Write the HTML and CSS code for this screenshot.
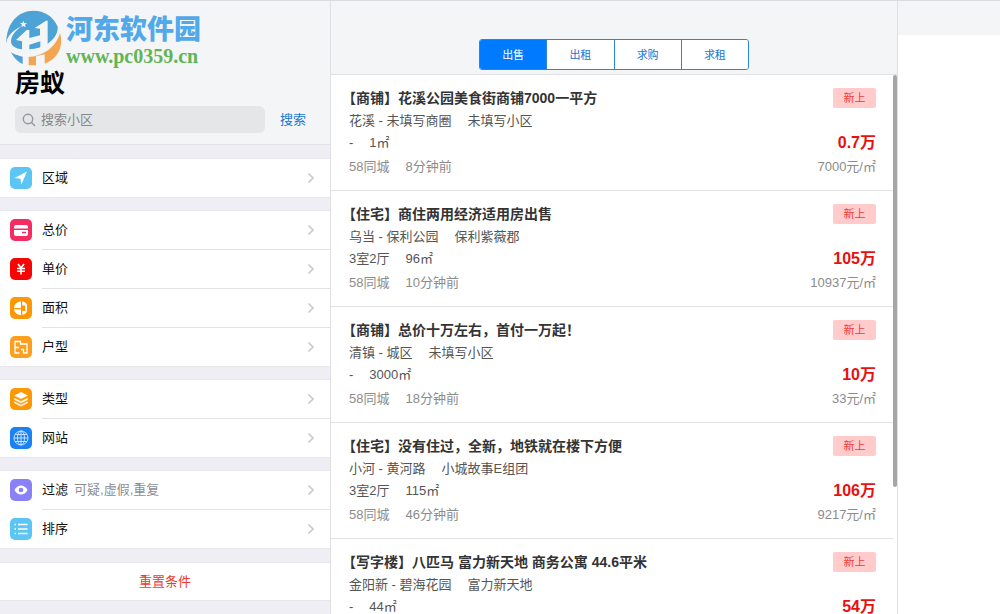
FILE: index.html
```html
<!DOCTYPE html>
<html lang="zh-CN">
<head>
<meta charset="utf-8">
<meta name="viewport" content="width=device-width, initial-scale=1">
<title>房蚁</title>
<link rel="stylesheet" href="styles.css">
</head>
<body>
<svg class="sprite" aria-hidden="true">
  <symbol id="chevron" viewBox="0 0 8 12"><path d="M1.500 1.500 6 6l-4.500 4.500" fill="none" stroke="currentColor" stroke-width="1.600"/></symbol>
</svg>
<div class="app">
  <aside class="sidebar">
    <header class="side-head">
      <div class="brand">
        <svg class="brand-mark" viewBox="9 12 171 171" aria-hidden="true">
          <path d="M13 106C14 50 50 14 94 14c34 0 60 18 73 48 2 30-28 58-70 68-36 8-66 6-80-8Z" fill="#4da3d6"/>
          <path d="M24 130c10 12 24 20 38 22v22C44 166 30 150 24 130Z" fill="#4da3d6"/>
          <path d="M80 153c50-4 82-32 94-72 12 42-8 78-46 92v-28l-26 6v27H80Z" fill="#f3a551"/>
          <path d="M60 60C30 74 12 94 13 116c4 28 40 38 80 32 42-8 76-36 82-76-12 32-42 50-78 56-38 6-68 0-70-20-1-16 12-34 33-48Z" fill="#f4f5f7"/>
          <path d="M42 102 74 72h8v24l32-8V68l-16-2 34-22h5v84l-22 10v-32l-33 10v24H60v-34Z" fill="#f4f5f7"/>
          <path d="m64 44 3 7 8 0-6 5 2 8-7-4-6 4 2-8-6-5 7 0Z" fill="#f4f5f7"/>
        </svg>
        <div class="brand-text">
          <span class="brand-name">河东软件园</span>
          <span class="brand-url">www.pc0359.cn</span>
        </div>
      </div>
      <h1 class="app-title">房蚁</h1>
      <form class="search">
        <label class="search-field">
          <svg class="search-icon" viewBox="0 0 14 14" aria-hidden="true"><circle cx="6" cy="6" r="4.700"/><path d="m9.500 9.500 3.500 3.500"/></svg>
          <input type="search" placeholder="搜索小区" aria-label="搜索小区">
        </label>
        <button type="button" class="search-button">搜索</button>
      </form>
    </header>
    <nav class="filters">
      <div class="group">
        <a class="row" href="#area">
          <svg class="icon sky" viewBox="0 0 22 22"><path d="M17 4.500 4.500 11l6 .8.800 6Z" fill="#fff"/></svg>
          <span class="row-body">区域<svg class="chevron"><use href="#chevron"/></svg></span>
        </a>
      </div>
      <div class="group">
        <a class="row" href="#total">
          <svg class="icon pink" viewBox="0 0 22 22"><path d="M4 8a2 2 0 0 1 2-2h10a2 2 0 0 1 2 2v1.500H4ZM4 11h14v4a2 2 0 0 1-2 2H6a2 2 0 0 1-2-2Z" fill="#fff"/><path d="M12 13.500h4" stroke="#f52c62" stroke-width="1.300"/></svg>
          <span class="row-body">总价<svg class="chevron"><use href="#chevron"/></svg></span>
        </a>
        <a class="row" href="#unit">
          <svg class="icon red" viewBox="0 0 22 22"><path d="m8 6 3 4 3-4M11 10v6.500M7 10.500h8M7 13.300h8" fill="none" stroke="#fff" stroke-width="1.600"/></svg>
          <span class="row-body">单价<svg class="chevron"><use href="#chevron"/></svg></span>
        </a>
        <a class="row" href="#size">
          <svg class="icon orange" viewBox="0 0 22 22"><path d="M11 4.500V11H4C4 7.500 7 4.500 11 4.500ZM4 12.300h7V18c-4 0-6.700-2.500-7-5.700ZM12.300 4.600c2.200.3 3.700 1.400 4.700 3v6.800c-1 1.800-2.500 3-4.700 3.400V14h3V8.500h-3Z" fill="#fff"/></svg>
          <span class="row-body">面积<svg class="chevron"><use href="#chevron"/></svg></span>
        </a>
        <a class="row" href="#layout">
          <svg class="icon amber" viewBox="0 0 22 22"><path d="M9.500 17H5V5.500h5.500V8H17v9h-3.500v-3.500h-2.500M5 11.500h4" fill="none" stroke="#fff" stroke-width="1.300"/></svg>
          <span class="row-body">户型<svg class="chevron"><use href="#chevron"/></svg></span>
        </a>
      </div>
      <div class="group">
        <a class="row" href="#type">
          <svg class="icon orange" viewBox="0 0 22 22"><path d="m11 4.200 6.500 3.300L11 10.800 4.500 7.500ZM4.500 10.200 11 13.400l6.500-3.200v1.600L11 15l-6.500-3.200ZM4.500 13.700 11 16.900l6.500-3.200v1.300L11 18.200 4.500 15Z" fill="#fff" stroke="#fff" stroke-width=".4" stroke-linejoin="round"/></svg>
          <span class="row-body">类型<svg class="chevron"><use href="#chevron"/></svg></span>
        </a>
        <a class="row" href="#site">
          <svg class="icon blue" viewBox="0 0 22 22"><g fill="none" stroke="#d5e9ff" stroke-width=".9"><circle cx="11" cy="11" r="7"/><ellipse cx="11" cy="11" rx="3.500" ry="7"/><path d="M11 4v14M4 11h14M5.200 7.500h11.600M5.200 14.500h11.600"/></g></svg>
          <span class="row-body">网站<svg class="chevron"><use href="#chevron"/></svg></span>
        </a>
      </div>
      <div class="group">
        <a class="row" href="#filter">
          <svg class="icon violet" viewBox="0 0 22 22"><path d="M4.500 11c3-6 10-6 13 0-3 6-10 6-13 0Z" fill="#fff"/><circle cx="11" cy="11" r="2.300" fill="#8a80f8"/></svg>
          <span class="row-body">过滤<span class="row-note">可疑,虚假,重复</span><svg class="chevron"><use href="#chevron"/></svg></span>
        </a>
        <a class="row" href="#sort">
          <svg class="icon sky" viewBox="0 0 22 22"><path d="M8 6.500h9.500M8 11h9.500M8 15.500h9.500M4.500 6.500H6M4.500 11H6M4.500 15.500H6" stroke="#fff" stroke-width="1.400"/></svg>
          <span class="row-body">排序<svg class="chevron"><use href="#chevron"/></svg></span>
        </a>
      </div>
      <button type="button" class="reset">重置条件</button>
    </nav>
  </aside>

  <main class="results">
    <header class="results-head">
      <div class="segments">
        <button type="button" class="segment active">出售</button>
        <button type="button" class="segment">出租</button>
        <button type="button" class="segment">求购</button>
        <button type="button" class="segment">求租</button>
      </div>
    </header>
    <div class="list">
      <article class="card">
        <div class="info">
          <h2 class="title">【商铺】花溪公园美食街商铺7000一平方</h2>
          <p class="line"><span>花溪 - 未填写商圈</span><span>未填写小区</span></p>
          <p class="line"><span>-</span><span>1㎡</span></p>
          <p class="line source"><span>58同城</span><span>8分钟前</span></p>
        </div>
        <div class="side"><span class="badge">新上</span><strong class="price">0.7万</strong><span class="unit">7000元/㎡</span></div>
      </article>
      <article class="card">
        <div class="info">
          <h2 class="title">【住宅】商住两用经济适用房出售</h2>
          <p class="line"><span>乌当 - 保利公园</span><span>保利紫薇郡</span></p>
          <p class="line"><span>3室2厅</span><span>96㎡</span></p>
          <p class="line source"><span>58同城</span><span>10分钟前</span></p>
        </div>
        <div class="side"><span class="badge">新上</span><strong class="price">105万</strong><span class="unit">10937元/㎡</span></div>
      </article>
      <article class="card">
        <div class="info">
          <h2 class="title">【商铺】总价十万左右，首付一万起！</h2>
          <p class="line"><span>清镇 - 城区</span><span>未填写小区</span></p>
          <p class="line"><span>-</span><span>3000㎡</span></p>
          <p class="line source"><span>58同城</span><span>18分钟前</span></p>
        </div>
        <div class="side"><span class="badge">新上</span><strong class="price">10万</strong><span class="unit">33元/㎡</span></div>
      </article>
      <article class="card">
        <div class="info">
          <h2 class="title">【住宅】没有住过，全新，地铁就在楼下方便</h2>
          <p class="line"><span>小河 - 黄河路</span><span>小城故事E组团</span></p>
          <p class="line"><span>3室2厅</span><span>115㎡</span></p>
          <p class="line source"><span>58同城</span><span>46分钟前</span></p>
        </div>
        <div class="side"><span class="badge">新上</span><strong class="price">106万</strong><span class="unit">9217元/㎡</span></div>
      </article>
      <article class="card">
        <div class="info">
          <h2 class="title">【写字楼】八匹马 富力新天地 商务公寓 44.6平米</h2>
          <p class="line"><span>金阳新 - 碧海花园</span><span>富力新天地</span></p>
          <p class="line"><span>-</span><span>44㎡</span></p>
        </div>
        <div class="side"><span class="badge">新上</span><strong class="price">54万</strong></div>
      </article>
      <div class="scroll-thumb"></div>
    </div>
  </main>

  <section class="detail"><header class="detail-head"></header></section>
</div>
</body>
</html>
```

FILE: styles.css
```css
* { box-sizing: border-box; }

body {
  margin: 0;
  font: 13px/22px "Liberation Sans", "Noto Sans CJK SC", sans-serif;
  color: #333;
  background: #fff;
}

h1, h2, p { margin: 0; }
a { color: inherit; text-decoration: none; }
button, input { font: inherit; border: 0; padding: 0; }
button { cursor: pointer; }
.sprite { display: none; }

.app {
  display: grid;
  grid-template-columns: 331fr 567fr 102fr;
  height: 100vh;
  overflow: hidden;
  border-top: 1px solid #d9dadd;
}

/* Sidebar */
.sidebar {
  min-width: 0;
  background: #eeeef4;
  border-right: 1px solid #dfe0e4;
  overflow: hidden;
}

.side-head {
  padding: 9px 15px 11px;
  background: #f4f5f7;
  border-bottom: 1px solid #e2e2e8;
}

.brand {
  display: flex;
  align-items: flex-start;
  gap: 4px;
  margin-left: -10px;
}
.brand-mark { width: 57px; height: 57px; }
.brand-text { display: flex; flex-direction: column; padding-top: 4px; }
.brand-name { font-size: 27px; line-height: 32px; font-weight: 900; color: #52a9ea; }
.brand-url {
  font: bold 20px/21px "Liberation Serif", serif;
  color: #62b455;
}

.app-title {
  margin-top: 2px;
  font-size: 25px;
  line-height: 28px;
  color: #000;
}

.search { display: flex; gap: 15px; margin-top: 9px; }
.search-field {
  flex: 1;
  display: flex;
  align-items: center;
  gap: 5px;
  height: 27px;
  padding: 0 7px;
  border-radius: 6px;
  background: #e5e6e8;
}
.search-icon { width: 14px; height: 14px; fill: none; stroke: #96979b; stroke-width: 1.4; }
.search-field input {
  flex: 1;
  min-width: 0;
  background: none;
  outline: 0;
  appearance: none;
}
.search-field input::placeholder { color: #85868a; opacity: 1; }
.search-button { width: 25px; margin-right: 10px; background: none; color: #1a76d2; white-space: nowrap; }

.group { margin-top: 14px; background: #fff; box-shadow: 0 0 0 1px #e6e6eb; }
.row { display: flex; align-items: center; gap: 10px; padding-left: 10px; color: #111; }
.row-body {
  flex: 1;
  display: flex;
  align-items: center;
  height: 38px;
  padding-right: 15px;
}
.row + .row .row-body { height: 39px; border-top: 1px solid #e3e3e6; }
.row-note { margin-left: 6px; color: #8e8e93; }
.chevron { width: 8px; height: 12px; margin-left: auto; color: #c7c7cc; }

.icon { width: 22px; height: 22px; border-radius: 5px; }
.sky { background: #5bc5f3; }
.pink { background: #f52c62; }
.red { background: #f60505; }
.orange { background: #fd9704; }
.amber { background: #fb9f20; }
.blue { background: #1b82f4; }
.violet { background: #8a80f8; }

.reset {
  display: block;
  width: 100%;
  height: 37px;
  margin-top: 15px;
  background: #fff;
  color: #f0382e;
  box-shadow: 0 0 0 1px #e6e6eb;
}

/* Listings */
.results {
  display: flex;
  flex-direction: column;
  min-width: 0;
  min-height: 0;
  border-right: 1px solid #dfe0e4;
}
.results-head {
  flex: none;
  display: flex;
  justify-content: center;
  padding: 38px 0 4px;
  background: #f4f5f7;
  border-bottom: 1px solid #e1e2e5;
}
.segments {
  display: flex;
  width: 270px;
  height: 31px;
  border: 1px solid #2a86dc;
  border-radius: 3px;
  overflow: hidden;
}
.segment { flex: 1; font-size: 11px; background: #fff; color: #1a76d2; }
.segment + .segment { border-left: 1px solid #2a86dc; }
.segment.active { background: #007aff; color: #fff; }

.list { position: relative; flex: 1; min-height: 0; overflow: hidden; }
.card {
  display: flex;
  justify-content: space-between;
  margin-right: 4px;
  padding: 11px 17px 11px 18px;
  border-bottom: 1px solid #e1e2e4;
}
.title { font-size: 14px; line-height: 24px; text-spacing-trim: trim-start; white-space: nowrap; }
.line { display: flex; gap: 16px; color: #555; }
.source, .unit { color: #8c8c8c; line-height: 25px; }
.side { display: flex; flex-direction: column; align-items: flex-end; padding-top: 2px; }
.badge {
  width: 43px;
  margin-bottom: 24px;
  border-radius: 2px;
  background: #ffcccb;
  color: #ee4037;
  font-size: 11px;
  line-height: 20px;
  text-align: center;
}
.price { font-size: 16px; color: #e8100f; }

.scroll-thumb {
  position: absolute;
  top: 0;
  right: 0;
  width: 4px;
  height: 412px;
  border-radius: 2px;
  background: #a6a6a6;
}

.detail-head { height: 34px; background: #f4f5f7; }
```
